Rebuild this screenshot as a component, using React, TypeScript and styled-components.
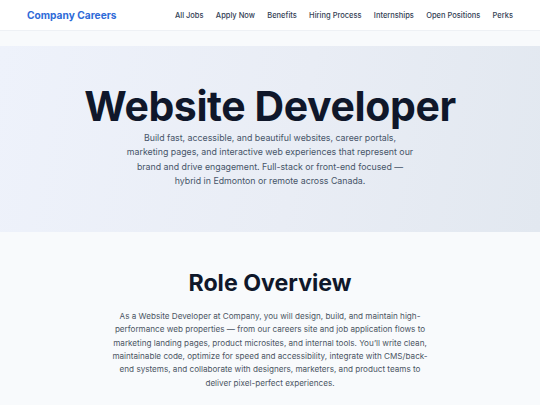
import React from 'react';
import styled, { createGlobalStyle } from 'styled-components';

const GlobalStyle = createGlobalStyle`
  html, body {
    margin: 0;
    padding: 0;
    background: #f8fafc;
    font-family: 'Inter', 'Noto Sans', sans-serif;
    -webkit-font-smoothing: antialiased;
  }
  * {
    box-sizing: border-box;
  }
`;

const Header = styled.header`
  display: flex;
  justify-content: space-between;
  align-items: center;
  height: 31px;
  padding: 0 27px;
  background: #ffffff;
  border-bottom: 1px solid #eef1f5;
`;

const Logo = styled.a`
  font-size: 10.2px;
  font-weight: 700;
  color: #2f6bd8;
  text-decoration: none;
`;

const Nav = styled.nav`
  display: flex;
  gap: 12.3px;
`;

const NavLink = styled.a`
  font-size: 7.5px;
  font-weight: 500;
  color: #334155;
  text-decoration: none;
`;

const Main = styled.main`
  padding-top: 15px;
`;

const Hero = styled.section`
  padding: 38px 24px 44px;
  text-align: center;
  background: linear-gradient(100deg, #eef2fb 0%, #e9edf5 55%, #e2e8f0 100%);
`;

const Title = styled.h1`
  margin: 0;
  font-size: 41px;
  line-height: 1.1;
  font-weight: 700;
  letter-spacing: -0.01em;
  color: #0f172a;
`;

const Lead = styled.p`
  max-width: 292px;
  margin: 2px auto 0;
  font-size: 8.8px;
  line-height: 14.2px;
  color: #475569;
`;

const Section = styled.section`
  padding: 38px 24px 30px;
  text-align: center;
`;

const SectionTitle = styled.h2`
  margin: 0;
  font-size: 23.2px;
  line-height: 1.2;
  font-weight: 700;
  color: #0f172a;
`;

const Body = styled.p`
  max-width: 328px;
  margin: 12px auto 0;
  font-size: 8.13px;
  line-height: 13.4px;
  color: #4b5563;
`;

const links = [
  'All Jobs',
  'Apply Now',
  'Benefits',
  'Hiring Process',
  'Internships',
  'Open Positions',
  'Perks',
];

const App: React.FC = () => {
  return (
    <>
      <GlobalStyle />
      <Header>
        <Logo href="#">Company Careers</Logo>
        <Nav>
          {links.map((l) => (
            <NavLink key={l} href="#">
              {l}
            </NavLink>
          ))}
        </Nav>
      </Header>
      <Main>
        <Hero>
          <Title>Website Developer</Title>
          <Lead>
            Build fast, accessible, and beautiful websites, career portals,
            marketing pages, and interactive web experiences that represent our
            brand and drive engagement. Full-stack or front-end focused —
            hybrid in Edmonton or remote across Canada.
          </Lead>
        </Hero>
        <Section>
          <SectionTitle>Role Overview</SectionTitle>
          <Body>
            As a Website Developer at Company, you will design, build, and
            maintain high-performance web properties — from our careers site
            and job application flows to marketing landing pages, product
            microsites, and internal tools. You’ll write clean, maintainable
            code, optimize for speed and accessibility, integrate with
            CMS/back-end systems, and collaborate with designers, marketers,
            and product teams to deliver pixel-perfect experiences.
          </Body>
        </Section>
      </Main>
    </>
  );
};

export default App;
